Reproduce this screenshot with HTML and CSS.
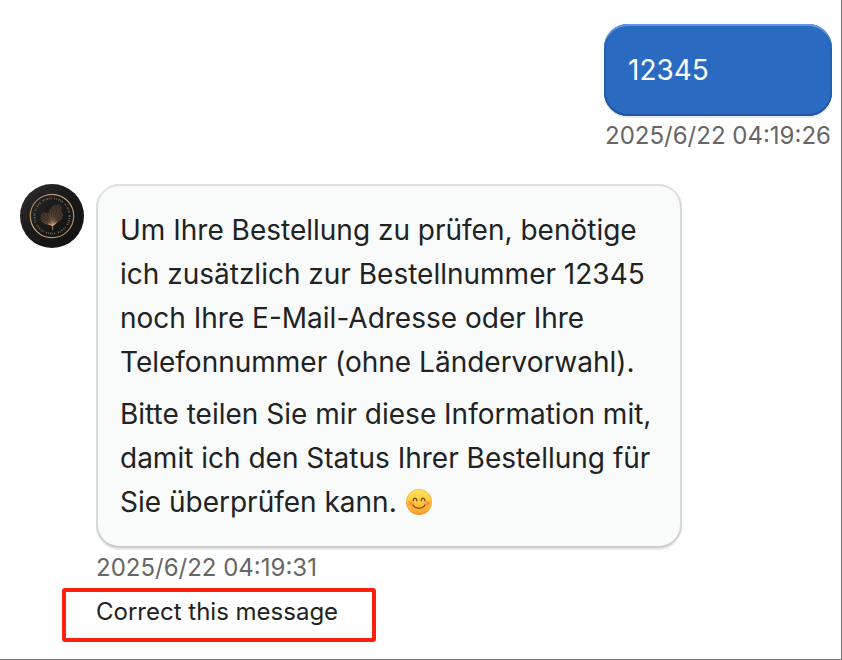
FILE: index.html
```html
<!DOCTYPE html>
<html lang="de">
<head>
<meta charset="utf-8">
<meta name="viewport" content="width=device-width, initial-scale=1">
<title>Chat</title>
<link rel="stylesheet" href="styles.css">
</head>
<body>
<main class="chat">
  <section class="message message-user">
    <div class="bubble bubble-user"><p>12345</p></div>
    <time class="stamp" datetime="2025-06-22T04:19:26">2025/6/22 04:19:26</time>
  </section>
  <section class="message message-bot">
    <svg class="avatar" viewBox="0 0 64 64" aria-hidden="true">
      <defs>
        <linearGradient id="disc" x1="0" y1="0" x2="1" y2="1">
          <stop offset="0" stop-color="#303030"/>
          <stop offset=".45" stop-color="#1a1a1a"/>
          <stop offset="1" stop-color="#111"/>
        </linearGradient>
        <linearGradient id="gold" x1="0" y1="0" x2="1" y2="1">
          <stop offset="0" stop-color="#8d7050"/>
          <stop offset=".45" stop-color="#d3ad82"/>
          <stop offset="1" stop-color="#9c7a56"/>
        </linearGradient>
        <radialGradient id="leaf" gradientUnits="userSpaceOnUse" cx="32.600" cy="41" r="20">
          <stop offset="0" stop-color="#d8b083"/>
          <stop offset=".3" stop-color="#8f6c4a"/>
          <stop offset="1" stop-color="#4a3b2f"/>
        </radialGradient>
      </defs>
      <circle cx="32" cy="32" r="32" fill="url(#disc)"/>
      <circle cx="32" cy="32" r="21.7" fill="none" stroke="url(#gold)" stroke-width="1.2"/>
      <circle cx="32" cy="32" r="17.6" fill="none" stroke="#9a8063" stroke-opacity=".75" stroke-width="1.8" stroke-dasharray="1 1.2 .7 1.3 1.2 1.1 .8 1 1 2.8"/>
      <path d="M32.600 41.500C28 41 23 40 20.500 36C21 34 20 32 21 30C23 28 26 28 28.500 29C29 24 34 19.500 40 20.500C42 22 42.500 25 41.500 27.500C44 30 43.500 34 40.500 36C38 38 36 40 32.600 41.500Z" fill="#43352a" fill-opacity=".8"/>
      <g fill="none" stroke="url(#leaf)" stroke-width=".5">
        <path d="M32.600 41.500Q27 41 21 37M32.600 41.500Q26 38 20.500 34M32.600 41.500Q27 36 21 31M32.600 41.500Q28 34 24 29M32.600 41.500Q30 34 28 29M32.600 41.500Q30 32 30 26M32.600 41.500Q31 31 34 22M32.600 41.500Q33 30 38 20.500M32.600 41.500Q35 31 41 22M32.600 41.500Q36 33 42 27M32.600 41.500Q37 35 43 31M32.600 41.500Q38 38 42 34"/>
      </g>
      <path d="M32.600 41L32.600 46" stroke="#c19a70" stroke-width=".8"/>
      <path d="M27 39Q30 40 32.600 41Q34 40 37 37Q36 41 32.600 42Q29 41 27 39Z" fill="#dab188" fill-opacity=".7"/>
    </svg>
    <div class="content">
      <div class="bubble bubble-bot">
        <p>Um Ihre Bestellung zu prüfen, benötige ich zusätzlich zur Bestellnummer 12345 noch Ihre E-Mail-Adresse oder Ihre Telefonnummer (ohne Ländervorwahl).</p>
        <p>Bitte teilen Sie mir diese Information mit, damit ich den Status Ihrer Bestellung für Sie überprüfen kann. <svg class="emoji" viewBox="0 0 28 28" role="img" aria-label="😊">
          <defs>
            <linearGradient id="face" x1="0" y1="0" x2="0" y2="1">
              <stop offset="0" stop-color="#ffe45b"/>
              <stop offset=".5" stop-color="#ffc93f"/>
              <stop offset="1" stop-color="#f79a2c"/>
            </linearGradient>
            <radialGradient id="blush">
              <stop offset="0" stop-color="#ff7043" stop-opacity=".75"/>
              <stop offset="1" stop-color="#ff7043" stop-opacity="0"/>
            </radialGradient>
          </defs>
          <circle cx="14" cy="14" r="13" fill="url(#face)"/>
          <circle cx="14" cy="14" r="12.600" fill="none" stroke="#ee9635" stroke-opacity=".5" stroke-width=".8"/>
          <ellipse cx="5.500" cy="15.500" rx="4.500" ry="3.500" fill="url(#blush)"/>
          <ellipse cx="22.500" cy="15.500" rx="4.500" ry="3.500" fill="url(#blush)"/>
          <path d="M8.200 12.600C8.700 9.200 11.300 9.200 11.800 12.600M16.200 12.600C16.700 9.200 19.300 9.200 19.800 12.600M8 17C10.500 21.200 17.500 21.200 20 17" fill="none" stroke="#77420f" stroke-width="1.300" stroke-linecap="round"/>
        </svg></p>
      </div>
      <time class="stamp" datetime="2025-06-22T04:19:31">2025/6/22 04:19:31</time>
      <button class="correct" type="button">Correct this message</button>
    </div>
  </section>
</main>
</body>
</html>
```
FILE: styles.css
```css
* {
  box-sizing: border-box;
}

body {
  margin: 0;
  background: #fff;
  color: #202223;
  font-family: Inter, "Liberation Sans", sans-serif;
  font-size: 28px;
  line-height: 44px;
}

p {
  margin: 0;
}

.chat {
  display: flex;
  flex-direction: column;
  gap: 32px;
  min-height: 100vh;
  padding: 24px 9px 16px 20px;
  border-right: 1px solid #777;
  border-bottom: 1px solid #777;
}

.message {
  display: flex;
}

.message-user {
  flex-direction: column;
  align-self: flex-end;
  min-width: 228px;
}

.message-bot {
  align-items: flex-start;
  gap: 12px;
}

.avatar {
  flex: none;
  width: 64px;
  height: 64px;
}

.content {
  display: flex;
  flex-direction: column;
  align-items: flex-start;
  max-width: 586px;
}

.bubble {
  padding: 24px;
  border-radius: 24px;
}

.bubble p + p {
  margin-top: 8px;
}

.bubble-user {
  background: #2a6ac1;
  color: #fff;
  box-shadow: inset 0 2px #6197e2, inset 0 -2px #2355a0, inset 2px 0 #255fae, inset -2px 0 #255fae, 0 2px 1px #0000001a;
}

.bubble-bot {
  background: #f9fbfa;
  box-shadow: inset 0 2px #dfe1e0, inset 0 -2px #cbcdcc, inset 2px 0 #d8dad9, inset -2px 0 #d8dad9, 0 2px 1px #0000001a;
}

.emoji {
  width: 28px;
  height: 28px;
  vertical-align: -4px;
}

.stamp {
  margin-top: 4px;
  color: #666;
  font-size: 24px;
  line-height: 32px;
}

.message-user .stamp {
  text-align: center;
}

.correct {
  margin: 4px 0 0 -34px;
  padding: 4px 34px 10px 30px;
  border: 4px solid #ff2010;
  border-radius: 3px;
  background: #fff;
  color: #202223;
  font: inherit;
  font-size: 24px;
  line-height: 32px;
  cursor: pointer;
}
```
